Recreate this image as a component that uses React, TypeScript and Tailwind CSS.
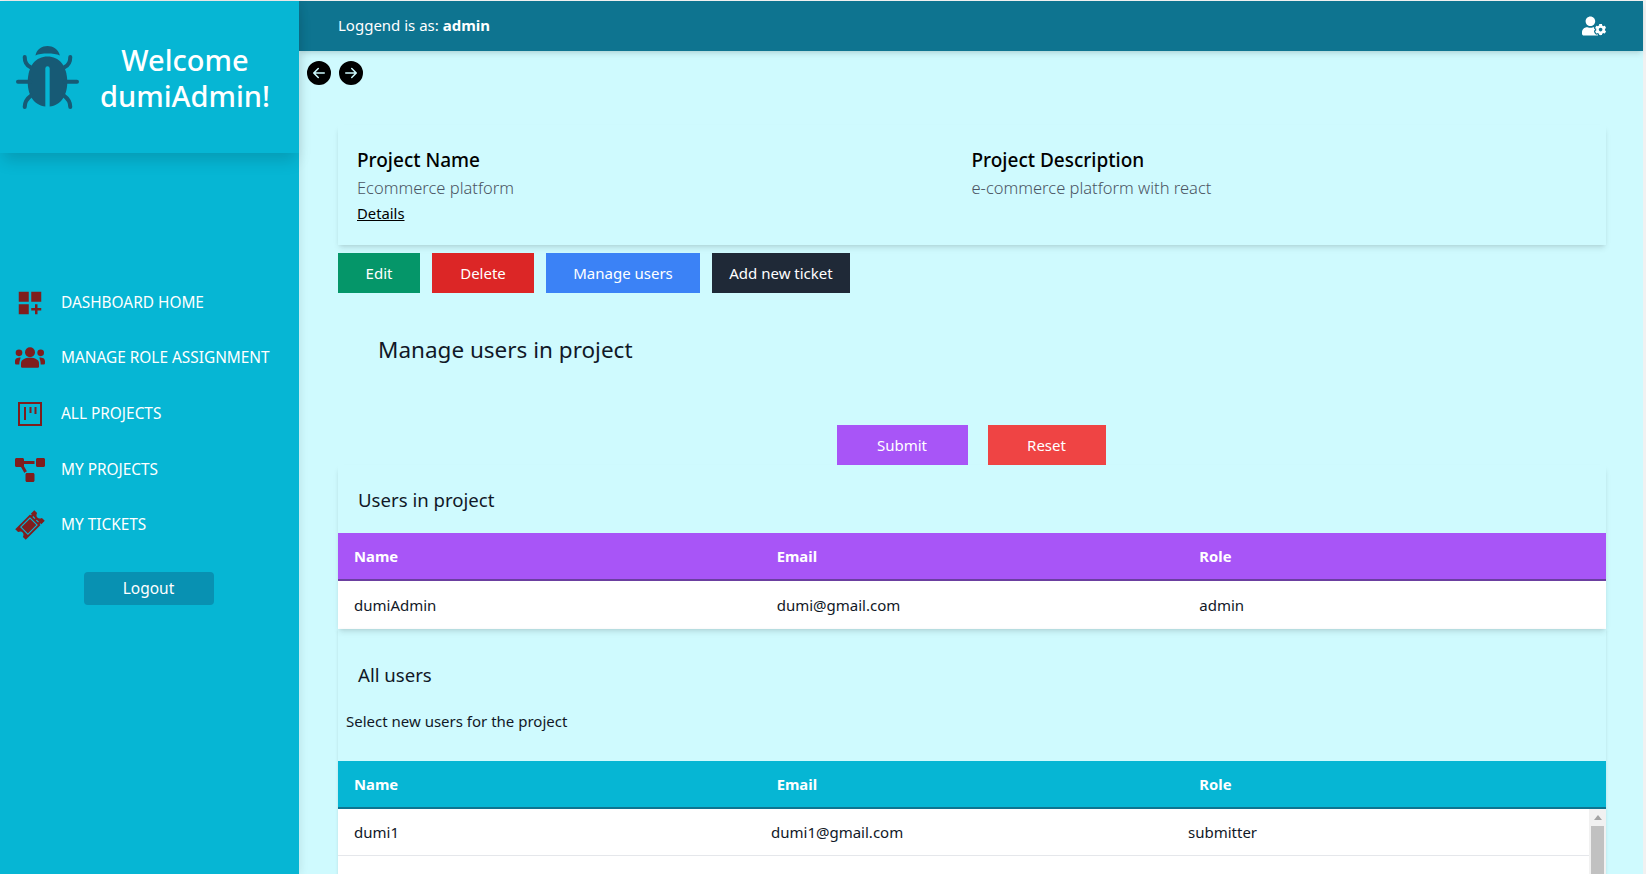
import { BsArrowLeftCircleFill, BsArrowRightCircleFill } from "react-icons/bs";
import { MdDashboardCustomize } from "react-icons/md";
import { FaProjectDiagram, FaUserCog } from "react-icons/fa";
import { GiTicket } from "react-icons/gi";

function BoardIcon({ size, className }: { size: number; className?: string }) {
  return (
    <svg width={size} height={size} viewBox="0 0 24 24" fill="none" stroke="currentColor" strokeWidth="2" className={className}>
      <rect x="1" y="1" width="22" height="22" />
      <path d="M7 5v13M12.5 5v6M17.5 5v7" />
    </svg>
  );
}

function UsersIcon({ className }: { size: number; className?: string }) {
  return (
    <svg width="30" height="21" viewBox="45 230 90 62" fill="currentColor" className={className}>
      <circle cx="90" cy="245" r="15" />
      <circle cx="57" cy="247" r="10" />
      <circle cx="122" cy="247" r="10" />
      <path d="M63 288V278C63 268 75 262 90 262C105 262 117 268 117 278V288Q117 292 113 292H67Q63 292 63 288Z" />
      <path d="M45 278V272C45 264 52 261 62 261C60 268 58 274 58 282H49Q45 282 45 278Z" />
      <path d="M135 278V272C135 264 128 261 118 261C120 268 122 274 122 282H131Q135 282 135 278Z" />
    </svg>
  );
}

function BugIcon({ className }: { className?: string }) {
  return (
    <svg width="63" height="63" viewBox="47 137 188 188" className={className}>
      <g fill="currentColor">
        <path d="M105 165C110 145 125 137 141 137C157 137 172 145 178 165C160 158 122 158 105 165Z" />
        <path d="M141 168C175 168 200 195 200 245C200 290 175 318 141 318C107 318 82 290 82 245C82 195 107 168 141 168Z" />
      </g>
      <g fill="none" stroke="currentColor" strokeWidth="12" strokeLinecap="round">
        <path d="M73 170C73 185 78 195 90 200M209 170C209 185 204 195 192 200M53 244H90M229 244H192M73 319C73 305 78 295 92 285M209 319C209 305 204 295 190 285" />
      </g>
      <path d="M141 204V330" fill="none" stroke="#06b6d4" strokeWidth="13" strokeLinecap="round" />
    </svg>
  );
}

const nav = [
  { label: "DASHBOARD HOME", Icon: MdDashboardCustomize, size: 30, h: "h-[55px]" },
  { label: "MANAGE ROLE ASSIGNMENT", Icon: UsersIcon, size: 30, h: "h-[55px]" },
  { label: "ALL PROJECTS", Icon: BoardIcon, size: 24, h: "h-[57px]" },
  { label: "MY PROJECTS", Icon: FaProjectDiagram, size: 30, h: "h-[55px]" },
  { label: "MY TICKETS", Icon: GiTicket, size: 32, h: "h-[56px]" },
];

function Row({ cells, h = "h-[48px]" }: { cells: string[]; h?: string }) {
  return (
    <div className={`grid grid-cols-3 ${h} items-center text-[15px] text-[#111827]`}>
      {cells.map((c) => (
        <div key={c} className="pl-4">{c}</div>
      ))}
    </div>
  );
}

function Head({ bg, border }: { bg: string; border: string }) {
  return (
    <div className={`grid grid-cols-3 h-[48px] items-center text-[14.8px] font-bold text-white border-b-2 ${bg} ${border}`}>
      <div className="pl-4">Name</div>
      <div className="pl-4">Email</div>
      <div className="pl-4">Role</div>
    </div>
  );
}

export default function App() {
  return (
    <div className="h-screen overflow-hidden flex bg-[#f1f1f1] pt-px pr-[3px] font-['Noto_Sans','Open_Sans',sans-serif]">
      <aside className="relative z-10 w-[299px] shrink-0 bg-[#06b6d4] flex flex-col shadow-[2px_0_8px_rgba(0,0,0,0.08)]">
        <div className="h-[152px] shrink-0 flex shadow-[0_10px_15px_-3px_rgba(0,0,0,0.15)] pt-[41px] pl-[16px]">
          <BugIcon className="text-[#175a75] mt-[4px] shrink-0" />
          <div className="w-[200px] ml-[6px] text-center text-white text-[29px] leading-[36px] font-medium">
            <div>Welcome</div>
            <div>dumiAdmin!</div>
          </div>
        </div>
        <nav className="mt-[122px] flex flex-col">
          {nav.map(({ label, Icon, size, h }) => (
            <div key={label} className={`flex items-center ${h}`}>
              <div className="w-[60px] flex justify-center">
                <Icon size={size} className="text-[#7f1d1d]" />
              </div>
              <span className="w-[239px] pl-px text-white text-[15.4px] whitespace-nowrap">{label}</span>
            </div>
          ))}
        </nav>
        <button className="mt-[19px] self-center w-[130px] h-[33px] rounded bg-[#0891b2] text-white text-[15.5px] -translate-x-px">Logout</button>
      </aside>
      <main className="flex-1 min-w-0 bg-[#cffafe] flex flex-col">
        <header className="h-[50px] shrink-0 bg-[#0e7490] shadow-md flex items-center justify-between pl-[39px] pr-[37px] text-white text-[15px]">
          <div className="pb-[2px]">Loggend is as: <b>admin</b></div>
          <FaUserCog size={24} />
        </header>
        <div className="flex gap-[8px] pl-[8px] pt-[10px]">
          <BsArrowLeftCircleFill size={24} className="text-black" />
          <BsArrowRightCircleFill size={24} className="text-black" />
        </div>
        <div className="ml-[39px] mr-[37px] mt-[40px] flex flex-col">
          <div className="h-[120px] shadow-md grid grid-cols-2 pl-[19px] pr-5 pt-[21px]">
            <div>
              <div className="text-[19px] leading-[28px] font-medium text-black">Project Name</div>
              <div className="text-[16.5px] leading-[27px] text-[#4b5563] font-light">Ecommerce platform</div>
              <a className="text-[14.8px] leading-[25px] underline text-black">Details</a>
            </div>
            <div>
              <div className="text-[19px] leading-[28px] font-medium text-black">Project Description</div>
              <div className="text-[16.5px] leading-[27px] text-[#4b5563] font-light">e-commerce platform with react</div>
            </div>
          </div>
          <div className="flex gap-3 mt-2 text-white text-[15px]">
            <button className="h-[40px] w-[82px] bg-[#059669]">Edit</button>
            <button className="h-[40px] w-[102px] bg-[#dc2626]">Delete</button>
            <button className="h-[40px] w-[154px] bg-[#3b82f6]">Manage users</button>
            <button className="h-[40px] w-[138px] bg-[#1f2937]">Add new ticket</button>
          </div>
          <div className="pl-10 mt-[41px] text-[22.5px] leading-[32px] text-[#111827]">Manage users in project</div>
          <div className="flex justify-center gap-5 mt-[59px] pr-[2px] text-white text-[15px]">
            <button className="h-[40px] w-[131px] bg-[#a855f7]">Submit</button>
            <button className="h-[40px] w-[118px] bg-[#ef4444]">Reset</button>
          </div>
          <div className="shadow-md">
            <div className="pl-5 pt-[21px] pb-px text-[18.6px] leading-[28px] text-[#111827]">Users in project</div>
            <div className="mt-[18px] bg-white">
              <Head bg="bg-[#a855f7]" border="border-[#6b3fa0]" />
              <Row cells={["dumiAdmin", "dumi@gmail.com", "admin"]} />
            </div>
          </div>
          <div className="shadow-sm">
            <div className="pl-5 pt-[32px] text-[18.6px] leading-[28px] text-[#111827]">All users</div>
            <div className="pl-2 mt-[20px] text-[15px] leading-[24px] text-[#111827]">Select new users for the project</div>
            <div className="mt-[28px] bg-white">
              <Head bg="bg-[#06b6d4]" border="border-[#0e7490]" />
              <div className="flex">
                <div className="flex-1">
                  <Row cells={["dumi1", "dumi1@gmail.com", "submitter"]} h="h-[46px]" />
                  <div className="border-t border-[#e5e7eb] h-[60px]" />
                </div>
                <div className="w-[17px] bg-[#f1f1f1] flex flex-col items-center">
                  <svg width="10" height="8" viewBox="0 0 10 8" className="mt-[5px] mb-[4px]"><path d="M5 1 9 6H1z" fill="#a3a3a3" /></svg>
                  <div className="w-[13px] h-[200px] bg-[#c1c1c1]" />
                </div>
              </div>
            </div>
          </div>
        </div>
      </main>
    </div>
  );
}
